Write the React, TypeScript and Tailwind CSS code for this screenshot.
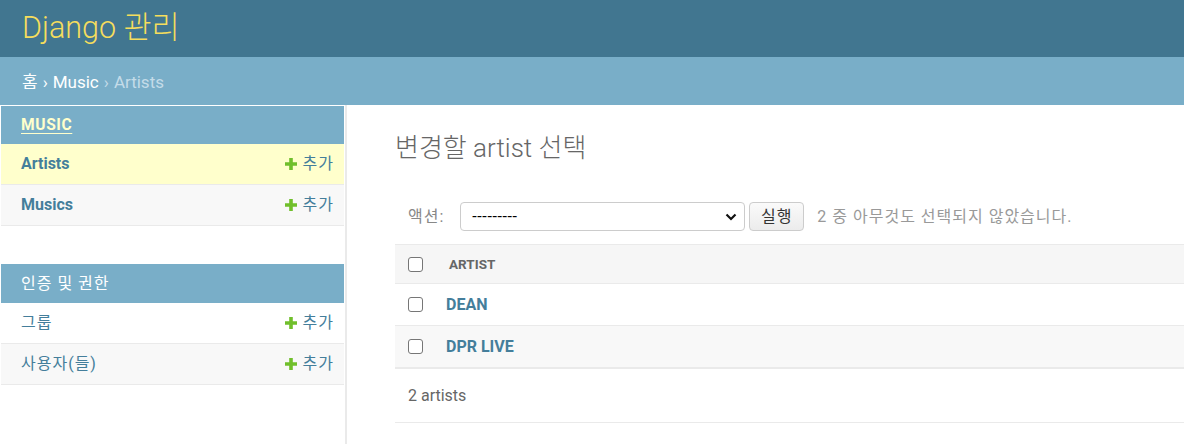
import React from "react";

const font = "font-['Roboto','Noto_Sans_CJK_KR',sans-serif]";

function AddIcon() {
  return (
    <svg width="14" height="14" viewBox="0 0 14 14" className="shrink-0">
      <path d="M7 1v12M1 7h12" stroke="#70bf2b" strokeWidth="3.6" />
    </svg>
  );
}

function Checkbox() {
  return <div className="h-[15px] w-[15px] shrink-0 rounded-[3px] border border-[#767676] bg-white" />;
}

type Row = { name: string; current?: boolean };

function Module({
  title,
  rows,
  current,
  captionH,
}: {
  title: string;
  rows: Row[];
  current?: boolean;
  captionH: string;
}) {
  return (
    <div>
      <div className={"flex items-center bg-[#79aec8] px-[20px] " + captionH}>
        {current ? (
          <span className="pt-[2px] text-[15.6px] font-bold uppercase tracking-[0.6px] text-[#ffffcc] underline underline-offset-[3px]">
            {title}
          </span>
        ) : (
          <span className="text-[16px] tracking-[1px] text-white">{title}</span>
        )}
      </div>
      {rows.map((r, i) => (
        <div
          key={r.name}
          className={
            "flex h-[41px] items-center justify-between border-b border-[#eaeaea] pl-[20px] pr-[10px] " +
            (r.current ? "bg-[#ffffcc]" : i % 2 === 1 ? "bg-[#f8f8f8]" : "bg-white")
          }
        >
          <span
            className={
              "text-[16px] text-[#447e9b] " + (current ? "font-bold" : "tracking-[1px]")
            }
          >
            {r.name}
          </span>
          <span className="flex items-center gap-[5px] text-[16px] tracking-[1px] text-[#447e9b]">
            <AddIcon />
            추가
          </span>
        </div>
      ))}
    </div>
  );
}

export default function App() {
  const artists = ["DEAN", "DPR LIVE"];

  return (
    <div className={`${font} h-[444px] w-[1184px] overflow-hidden bg-white`}>
      <header className="flex h-[57px] items-center bg-[#417690] px-[22px]">
        <h1 className="text-[30.5px] font-light leading-none text-[#f5dd5d]">Django 관리</h1>
      </header>

      <div className="flex h-[48px] items-center gap-[5px] bg-[#79aec8] px-[22px] pt-[3px] text-[17px] text-white">
        <span>홈</span>
        <span>›</span>
        <span>Music</span>
        <span className="text-[#c4dce8]">›</span>
        <span className="text-[#c4dce8]">Artists</span>
      </div>

      <div className="flex">
        <nav className="h-[339px] w-[347px] shrink-0 border-r-2 border-[#eaeaea] px-px pt-px">
          <Module
            title="Music"
            current
            captionH="h-[38px]"
            rows={[{ name: "Artists", current: true }, { name: "Musics" }]}
          />
          <div className="h-[38px]" />
          <Module
            title="인증 및 권한"
            captionH="h-[39px]"
            rows={[{ name: "그룹" }, { name: "사용자(들)" }]}
          />
        </nav>

        <main className="min-w-0 flex-1 pl-[48px] pt-[28px]">
          <h2 className="h-[30px] text-[26px] font-light leading-[30px] text-[#666]">변경할 artist 선택</h2>

          <div className="mt-[39px] flex h-[29px] items-center pl-[13px] text-[16px]">
            <span className="tracking-[1px] text-[#888]">액션:</span>
            <div className="ml-[16px] flex h-[29px] w-[285px] items-center justify-between rounded-[4px] border border-[#ccc] bg-white pl-[11px] pr-[7px]">
              <span className="text-[16px] tracking-[0.6px] text-black">---------</span>
              <svg width="12" height="8" viewBox="0 0 12 8">
                <path d="M1.5 1.5l4.5 4.5 4.5-4.5" fill="none" stroke="#111" strokeWidth="2.2" />
              </svg>
            </div>
            <div className="ml-[4px] flex h-[29px] w-[55px] items-center justify-center rounded-[4px] border border-[#ccc] bg-gradient-to-b from-[#fafafa] to-[#ececec] tracking-[1px] text-[#333]">
              실행
            </div>
            <span className="ml-[13px] tracking-[1px] text-[#999]">2 중 아무것도 선택되지 않았습니다.</span>
          </div>

          <div className="mt-[13px]">
            <div className="flex h-[40px] items-center border-y border-[#eaeaea] bg-[#f6f6f6] pl-[13px]">
              <Checkbox />
              <span className="ml-[26px] text-[13.5px] font-bold text-[#666]">ARTIST</span>
            </div>
            {artists.map((a, i) => (
              <div
                key={a}
                className={
                  "flex h-[42px] items-center border-b border-[#eaeaea] pl-[13px] " +
                  (i % 2 === 1 ? "bg-[#f8f8f8]" : "bg-white")
                }
              >
                <Checkbox />
                <span className="ml-[23px] text-[16px] font-bold text-[#447e9b]">{a}</span>
              </div>
            ))}
            <div className="flex h-[55px] items-center border-y border-[#eaeaea] pl-[13px] text-[16px] text-[#666]">
              2 artists
            </div>
          </div>
        </main>
      </div>
    </div>
  );
}
